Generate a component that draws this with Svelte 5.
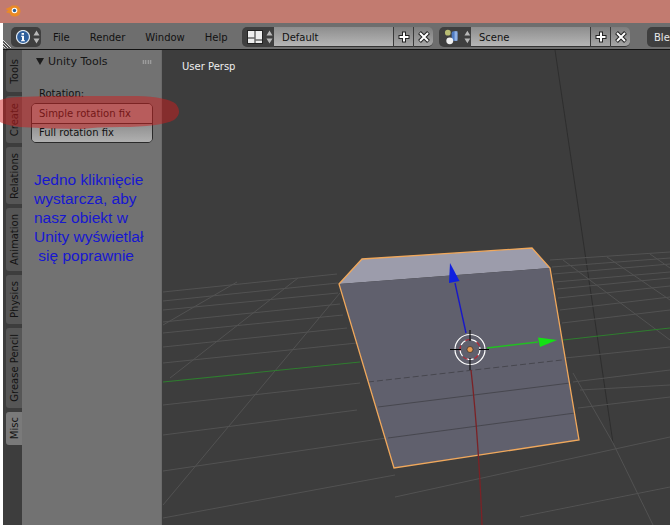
<script>
  const menus = ['File', 'Render', 'Window', 'Help']
  const tabs = [
    { name: 'Tools', h: 42 },
    { name: 'Create', h: 47 },
    { name: 'Relations', h: 57 },
    { name: 'Animation', h: 63 },
    { name: 'Physics', h: 49 },
    { name: 'Grease Pencil', h: 80 },
    { name: 'Misc', h: 33, active: true }
  ]
  const note = ['Jedno kliknięcie', 'wystarcza, aby', 'nasz obiekt w', 'Unity wyświetlał', ' się poprawnie']

  // grid lines in page coordinates, the view's viewBox starts at 162,50
  const grid = [
    [163, 292, 337, 274], [163, 301, 338, 283], [163, 310, 338, 293], [163, 322, 340, 304],
    [163, 333, 343, 315], [163, 347, 347, 328], [163, 363, 357, 343], [163, 405, 360, 383],
    [163, 435, 357, 410], [163, 471, 400, 436], [163, 518, 395, 475],
    [550, 260, 670, 252], [552, 267, 670, 258], [553, 274, 670, 264], [555, 282, 670, 272],
    [557, 289, 670, 278], [558, 298, 670, 286], [560, 310, 670, 297], [562, 323, 670, 310],
    [565, 358, 670, 347], [573, 382, 670, 370], [578, 408, 670, 397],
    [395, 497, 670, 437], [520, 517, 670, 487],
    [163, 325, 237, 282], [170, 378, 298, 278], [163, 505, 340, 293],
    [573, 373, 613, 443], [613, 443, 653, 525], [563, 260, 670, 340], [607, 257, 670, 300],
    [650, 254, 670, 268], [580, 390, 670, 385]
  ]
</script>

{#snippet arrows()}
  <svg class="arrows" viewBox="0 0 7 14" width="7" height="14">
    <path d="M3.5 0.5 6.5 5.5H0.5Z M3.5 13.5 0.5 8.5H6.5Z" fill="#b8b8b8" />
  </svg>
{/snippet}

{#snippet addClose()}
  <span class="act">
    <svg viewBox="0 0 14 14" width="14" height="14">
      <path d="M7 1.5V12.5M1.5 7H12.5" stroke="#222" stroke-width="4" />
      <path d="M7 2.5V11.5M2.5 7H11.5" stroke="#fff" stroke-width="2" />
    </svg>
  </span>
  <span class="act last">
    <svg viewBox="0 0 14 14" width="14" height="14">
      <path d="M2.5 2.5 11.5 11.5M11.5 2.5 2.5 11.5" stroke="#222" stroke-width="4" />
      <path d="M3 3 11 11M11 3 3 11" stroke="#fff" stroke-width="2" />
    </svg>
  </span>
{/snippet}

<div class="app">
  <div class="titlebar">
    <svg viewBox="0 0 16 14" width="16" height="14">
      <path d="M0.5 5 5 3 7 1.5H11.5Q15.5 3 15.5 7.5 15 12 10.5 12.5 6 13 4.5 9 1.5 9 1 8L3.5 6.5Z" fill="#ea8a26" />
      <circle cx="9.5" cy="6.5" r="2.8" fill="#fff" />
      <circle cx="9.5" cy="6.5" r="1.7" fill="#2d5f93" />
    </svg>
  </div>

  <header class="header">
    <svg class="corner" viewBox="0 0 8 12" width="8" height="12">
      <path d="M0 3 8 11M0 6 5 11M0 9 2.5 11.5" stroke="#ddd" stroke-width="1" />
      <path d="M0 4.5 7 11.5M0 7.5 4 11.5" stroke="#333" stroke-width="1" />
    </svg>
    <div class="selector info">
      <svg viewBox="0 0 14 14" width="14" height="14">
        <circle cx="7" cy="7" r="6.5" fill="#2f5f9c" stroke="#dfe8f2" stroke-width="1.2" />
        <path d="M5.6 3H8V4.8H5.6ZM5 5.8H8V10.2H9V11.2H5V10.2H6V6.8H5Z" fill="#fff" />
      </svg>
      {@render arrows()}
    </div>
    <nav class="menus">
      {#each menus as m}
        <span>{m}</span>
      {/each}
    </nav>
    <div class="group">
      <div class="selector">
        <svg viewBox="0 0 16 14" width="16" height="14">
          <rect x="0.5" y="0.5" width="15" height="13" fill="#eee" stroke="#222" />
          <path d="M8 0V14M1 8H7.5M8.5 10H15" stroke="#222" />
        </svg>
        {@render arrows()}
      </div>
      <span class="field">Default</span>
      {@render addClose()}
    </div>
    <div class="group scene">
      <div class="selector">
        <svg viewBox="0 0 18 16" width="18" height="16">
          <circle cx="4" cy="3.5" r="3" fill="#b9bd73" />
          <rect x="8" y="2" width="6" height="10" rx="2" fill="#4f7cc4" />
          <rect x="11" y="2" width="3" height="10" fill="#8fb0e4" />
          <circle cx="6" cy="12" r="3.6" fill="#f1f1f1" />
        </svg>
        {@render arrows()}
      </div>
      <span class="field">Scene</span>
      {@render addClose()}
    </div>
    <div class="engine">Ble</div>
  </header>

  <div class="body">
    <div class="tabs">
      {#each tabs as t}
        <div class="tab" class:active={t.active} style={`height: ${t.h}px`}>
          <span>{t.name}</span>
        </div>
      {/each}
    </div>

    <aside class="panel">
      <div class="panel-head">
        <span class="tri"></span>
        <span class="panel-title">Unity Tools</span>
        <span class="grip"></span>
      </div>
      <div class="label">Rotation:</div>
      <div class="buttons">
        <div class="btn first">Simple rotation fix</div>
        <div class="btn">Full rotation fix</div>
      </div>
      <div class="note">
        {#each note as line}
          <div>{line}</div>
        {/each}
      </div>
    </aside>

    <main class="view">
      <span class="persp">User Persp</span>
      <svg class="scene3d" viewBox="162 50 508 475" width="508" height="475">
        <path d="M555 50 613 443" stroke="#2e2e2e" stroke-width="1" />
        {#each grid as g}
          <line x1={g[0]} y1={g[1]} x2={g[2]} y2={g[3]} stroke="#525252" stroke-width="1" />
        {/each}
        <path d="M163 382 360 362M563 340 670 328" stroke="#2f7d2f" stroke-width="1.2" />

        <!-- cube -->
        <path d="M339 284 362 259 532 248 550 268Z" fill="#9c9cab" />
        <path d="M339 284 550 268 579 440 394 468Z" fill="#60606d" />
        <path d="M368 382 562 360" stroke="#47474f" stroke-dasharray="6 3" />
        <path d="M378 407 570 383M388 438 575 413" stroke="#47474f" />
        <path d="M339 284 362 259 532 248 550 268 579 440 394 468Z" fill="none" stroke="#f0a85c" stroke-width="1.3" />

        <!-- transform gizmo -->
        <path d="M471 370Q475 405 478 450T482 525" fill="none" stroke="#7b2226" stroke-width="1.3" />
        <path d="M466 333 455 283" stroke="#1818c8" stroke-width="1.4" />
        <path d="M450 263 459.5 281 449 283Z" fill="#0f1fe0" />
        <path d="M487 348 538 342" stroke="#22c022" stroke-width="1.4" />
        <path d="M557 340 538 337.5 540 347Z" fill="#14e014" />
        <circle cx="470" cy="349.5" r="15" fill="none" stroke="#fff" stroke-width="1.2" />
        <circle cx="470" cy="349.5" r="10" fill="none" stroke="#fff" stroke-width="1.2" stroke-dasharray="7 5" />
        <circle cx="470" cy="349.5" r="10" fill="none" stroke="#b02a38" stroke-width="1.2" stroke-dasharray="5 7" stroke-dashoffset="6" />
        <path d="M450 349.5H461M479 349.5H489M470 330V341M470 358V370" stroke="#000" stroke-width="1" />
        <circle cx="470" cy="349.5" r="3" fill="#e79a52" stroke="#222" stroke-width="0.6" />
      </svg>
    </main>
  </div>

  <svg class="brush" viewBox="0 0 181 34" width="181" height="34">
    <path d="M0 4Q8 1 20 1 60 -1 120 0 165 -1 176 8 183 17 174 24 160 31 120 31 95 31 82 33 50 33 20 31 5 29 0 26Z" fill="#cd1e1e" fill-opacity="0.5" />
  </svg>
</div>

<style>
  :global(body) {
    background: #fff;
  }

  .app {
    position: relative;
    width: 667px;
    height: 525px;
    padding-left: 3px;
    display: flex;
    flex-direction: column;
    overflow: hidden;
    font-family: "DejaVu Sans", sans-serif;
    font-size: 10px;
    color: #111;
  }

  .titlebar {
    height: 23px;
    flex: none;
    margin-left: -3px;
    padding: 4px 0 0 5px;
    box-sizing: border-box;
    background: #c27b70;
  }

  .titlebar svg {
    display: block;
  }

  .header {
    position: relative;
    height: 24px;
    padding: 2px 0 0 8px;
    flex: none;
    display: flex;
    align-items: center;
    background: #6e6e6e;
    border-bottom: 1px solid #111;
    white-space: nowrap;
  }

  .corner {
    position: absolute;
    left: 0;
    bottom: 0;
  }

  .selector {
    flex: none;
    width: 32px;
    height: 20px;
    display: flex;
    align-items: center;
    gap: 3px;
    box-sizing: border-box;
    padding-left: 5px;
    background: #3f3f3f;
    border-radius: 5px 0 0 5px;
  }

  .selector.info {
    width: 30px;
    border-radius: 5px;
  }

  .menus {
    flex: none;
    width: 201px;
    box-sizing: border-box;
    padding: 1px 0 0 12px;
    display: flex;
    gap: 20px;
  }

  .group {
    flex: none;
    display: flex;
    align-items: center;
    height: 20px;
  }

  .field {
    flex: none;
    width: 119px;
    height: 20px;
    padding-left: 8px;
    box-sizing: border-box;
    line-height: 21px;
    background: linear-gradient(#8d8d8d, #b6b6b6);
    border-bottom: 1px solid #333;
  }

  .act {
    flex: none;
    width: 20px;
    height: 20px;
    display: flex;
    align-items: center;
    justify-content: center;
    box-sizing: border-box;
    background: linear-gradient(#7d7d7d, #a6a6a6);
    border-left: 1px solid #3a3a3a;
    border-bottom: 1px solid #333;
  }

  .act.last {
    border-radius: 0 5px 5px 0;
  }

  .scene {
    margin-left: 6px;
  }

  .engine {
    flex: none;
    margin-left: 17px;
    height: 20px;
    width: 23px;
    padding-left: 7px;
    box-sizing: border-box;
    line-height: 21px;
    color: #e8e8e8;
    background: #3f3f3f;
    border-radius: 5px 0 0 5px;
  }

  .body {
    flex: 1;
    min-height: 0;
    display: flex;
  }

  .tabs {
    width: 19px;
    flex: none;
    display: flex;
    flex-direction: column;
    align-items: flex-end;
    gap: 4px;
    background: #3d3d3d;
  }

  .tab {
    width: 16px;
    flex: none;
    display: flex;
    align-items: center;
    justify-content: center;
    background: #565656;
    border-radius: 3px 0 0 3px;
    font-size: 10px;
    color: #131313;
  }

  .tab span {
    writing-mode: vertical-rl;
    transform: rotate(180deg);
    white-space: nowrap;
  }

  .tab.active {
    background: #7a7a7a;
  }

  .panel {
    width: 140px;
    flex: none;
    box-sizing: border-box;
    padding: 4px 9px 0;
    background: #727272;
    border-right: 1px solid #6a6a6a;
  }

  .panel-head {
    display: flex;
    align-items: center;
    height: 15px;
    padding-left: 5px;
  }

  .tri {
    width: 0;
    height: 0;
    border-left: 4px solid transparent;
    border-right: 4px solid transparent;
    border-top: 7px solid #1c1c1c;
    margin-right: 4px;
  }

  .panel-title {
    flex: 1;
    font-size: 11px;
    color: #161616;
  }

  .grip {
    width: 10px;
    height: 4px;
    background-image: radial-gradient(circle, #aaa 0.8px, transparent 1px);
    background-size: 2.5px 2px;
  }

  .label {
    margin: 18px 0 0 8px;
    line-height: 14px;
    height: 14px;
  }

  .buttons {
    margin-top: 2px;
    border: 1px solid #2a2a2a;
    border-radius: 5px;
    overflow: hidden;
    width: 122px;
    box-sizing: border-box;
  }

  .btn {
    height: 18px;
    line-height: 18px;
    padding-left: 7px;
    background: linear-gradient(#8f8f8f, #b0b0b0);
  }

  .btn.first {
    height: 19px;
    line-height: 20px;
    border-bottom: 1px solid #2a2a2a;
    background: #a39a9a;
  }

  .note {
    margin: 27px 0 0 3px;
    font-family: "Liberation Sans", Arial, sans-serif;
    font-size: 15.5px;
    line-height: 19px;
    color: #1717d0;
    white-space: pre;
  }

  .view {
    position: relative;
    flex: 1;
    min-width: 0;
    background: #3d3d3d;
    overflow: hidden;
  }

  .scene3d {
    display: block;
  }

  .persp {
    position: absolute;
    left: 20px;
    top: 11px;
    color: #eee;
  }

  .brush {
    position: absolute;
    left: 0;
    top: 96px;
  }
</style>
